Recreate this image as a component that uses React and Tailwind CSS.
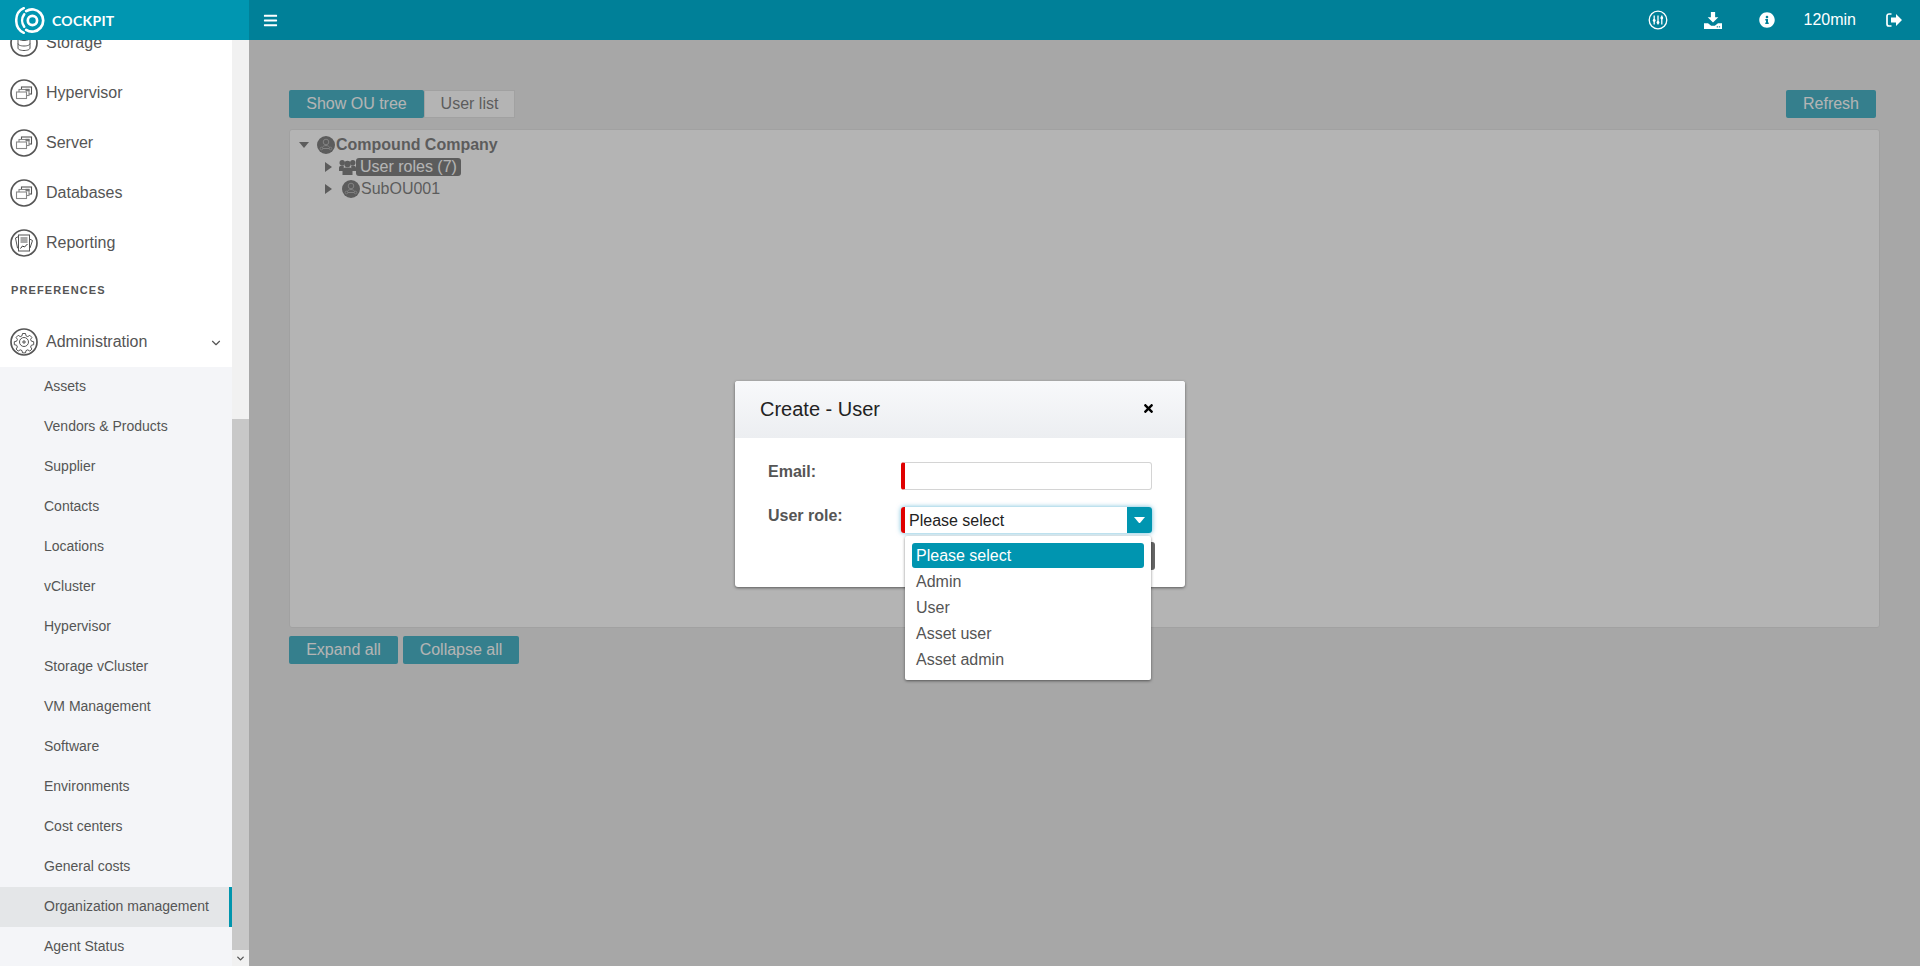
import { FaBars, FaInfoCircle, FaTimes } from 'react-icons/fa'
import { ChevronDown } from 'lucide-react'

const subItems = [
  'Assets',
  'Vendors & Products',
  'Supplier',
  'Contacts',
  'Locations',
  'vCluster',
  'Hypervisor',
  'Storage vCluster',
  'VM Management',
  'Software',
  'Environments',
  'Cost centers',
  'General costs',
  'Organization management',
  'Agent Status',
]

const roles = ['Admin', 'User', 'Asset user', 'Asset admin']

function Logo() {
  return (
    <svg width="31" height="27" viewBox="0 0 32 28" fill="none" stroke="white" strokeLinecap="round" className="shrink-0">
      <path d="M9 1.200C3.600 3.600 1.200 8.500 1.200 14S3.600 24.400 9 26.800" strokeWidth="2.600" />
      <circle cx="18" cy="14" r="4.800" strokeWidth="2.800" />
      <path d="M11.500 4.300A11.500 11.500 0 1 1 11.500 23.700" strokeWidth="2.800" />
      <path d="M9.500 7.500A11 11 0 0 0 9.500 20.500" strokeWidth="2.600" />
    </svg>
  )
}

function StackIcon() {
  return (
    <g stroke="#555" strokeWidth="1.100">
      <rect x="11.500" y="8" width="10" height="7" fill="#fff" />
      <rect x="9" y="10.500" width="10" height="6" fill="#fff" stroke="#888" />
      <rect x="6.500" y="13" width="10" height="6.500" fill="#fff" stroke="#888" />
      <rect x="15.500" y="9.800" width="4" height="2.500" fill="#777" stroke="none" />
    </g>
  )
}

function StorageGlyph() {
  return (
    <g fill="none" stroke="#555" strokeWidth="1">
      <ellipse cx="14" cy="9" rx="6" ry="2.500" />
      <path d="M8 9v10c0 1.500 2.500 2.500 6 2.500s6-1 6-2.500V9M8 14.500c0 1.500 2.500 2.500 6 2.500s6-1 6-2.500" />
    </g>
  )
}

function ReportGlyph() {
  return (
    <g fill="none" stroke="#555" strokeWidth="1">
      <path d="M8.500 7.500l-3 1.500 2 10 2.500 1.500M19.500 10l3 1.500-2.500 7.500-2 2" />
      <rect x="8.500" y="6" width="11" height="16" fill="#fff" />
      <path d="M10.500 9h7M10.500 11h7M10.500 13h7" />
      <path d="M10.500 19.500l2-2.500 2 1 3-3" stroke="#333" />
    </g>
  )
}

function GearGlyph() {
  return (
    <g fill="none" stroke="#555" strokeWidth="1">
      <path d="M12.500 5.500h3l.500 2.300 1.800.800 2-1.300 2.100 2.100-1.300 2 .800 1.800 2.300.500v3l-2.300.500-.800 1.800 1.300 2-2.100 2.100-2-1.300-1.800.800-.500 2.300h-3l-.500-2.300-1.800-.800-2 1.300-2.100-2.100 1.300-2-.800-1.800-2.300-.500v-3l2.300-.500.800-1.800-1.300-2 2.100-2.100 2 1.300 1.800-.800z" />
      <circle cx="14" cy="14" r="4.500" />
      <path d="M14 12v4M12 14h4" />
    </g>
  )
}

function RingIcon({ children }) {
  return (
    <svg width="28" height="28" viewBox="0 0 28 28" className="shrink-0">
      <circle cx="14" cy="14" r="13" fill="none" stroke="#555" strokeWidth="1.700" />
      {children}
    </svg>
  )
}

function NavItem({ label, glyph, chevron }) {
  return (
    <div className="h-[50px] flex items-center pl-[10px] pr-[9px] text-[16px] text-[#555] gap-[8px]">
      <RingIcon>{glyph}</RingIcon>
      <span>{label}</span>
      {chevron && <ChevronDown size={14} strokeWidth={2} className="ml-auto mt-[2px] text-[#555]" />}
    </div>
  )
}

function SliderIcon() {
  return (
    <svg width="20" height="20" viewBox="0 0 20 20" fill="none" stroke="white" strokeWidth="1.300">
      <circle cx="10" cy="10" r="8.800" />
      <path d="M6.200 5.500v9M10 5.500v9M13.800 5.500v9" />
      <circle cx="6.200" cy="10.500" r="1.400" fill="white" stroke="none" />
      <circle cx="10" cy="12.500" r="1.400" fill="white" stroke="none" />
      <circle cx="13.800" cy="8" r="1.400" fill="white" stroke="none" />
    </svg>
  )
}

function DownloadIcon() {
  return (
    <svg width="18" height="17" viewBox="0 0 17 16" fill="white">
      <path d="M6.500 0h4v5h3l-5 5-5-5h3z" />
      <path d="M0 10.500h3.800l3 2.500h3.400l3-2.500H17V16H0z" />
      <rect x="12" y="13.500" width="1.200" height="1" fill="#007f96" />
      <rect x="14" y="13.500" width="1.200" height="1" fill="#007f96" />
    </svg>
  )
}

function SignOutIcon() {
  return (
    <svg width="16" height="14" viewBox="0 0 16 14" className="shrink-0">
      <path d="M5.500 1H3a2 2 0 0 0-2 2v8a2 2 0 0 0 2 2h2.500" fill="none" stroke="white" strokeWidth="1.700" />
      <path d="M10 1l6 6-6 6V9.500H5v-5h5z" fill="white" />
    </svg>
  )
}

function OuIcon() {
  return (
    <svg width="18" height="18" viewBox="0 0 18 18" className="shrink-0">
      <circle cx="9" cy="9" r="9" fill="#4f4f4f" />
      <circle cx="9" cy="6" r="2.800" fill="#4f4f4f" stroke="#9a9a9a" strokeWidth="1" />
      <path d="M4.500 12.500c1-1.800 2.500-3 4.500-3s3.500 1.200 4.500 3z" fill="none" stroke="#9a9a9a" strokeWidth="1" />
      <circle cx="4.500" cy="12.500" r="1.300" fill="#4f4f4f" stroke="#9a9a9a" strokeWidth="0.800" />
      <circle cx="13.500" cy="12.500" r="1.300" fill="#4f4f4f" stroke="#9a9a9a" strokeWidth="0.800" />
    </svg>
  )
}

function UsersIcon() {
  return (
    <svg width="17" height="16" viewBox="0 0 17 16" fill="#4f4f4f" className="shrink-0">
      <circle cx="3.200" cy="3.800" r="2.700" />
      <circle cx="13.800" cy="3.800" r="2.700" />
      <path d="M0 12V9c0-1.500 1-2.400 2.500-2.400h2.300V12zM17 12V9c0-1.500-1-2.400-2.500-2.400h-2.300V12z" />
      <circle cx="8.500" cy="5" r="3.200" />
      <path d="M3.500 16v-4.500c0-2 1.300-3 3-3h4c1.700 0 3 1 3 3V16z" />
    </svg>
  )
}

function CaretRight({ className = '' }) {
  return (
    <svg width="7" height="10" viewBox="0 0 7 10" className={`shrink-0 ${className}`}>
      <path d="M0 0l7 5-7 5z" fill="#4f4f4f" />
    </svg>
  )
}

function CaretDown({ color = '#4f4f4f', size = 10, className = '' }) {
  return (
    <svg width={size} height={size * 0.6} viewBox="0 0 10 6" className={`shrink-0 ${className}`}>
      <path d="M0 0h10L5 6z" fill={color} />
    </svg>
  )
}

function PageButton({ children, className = '' }) {
  return (
    <button className={`h-[28px] bg-[#0095b0] rounded-[2px] text-white text-[16px] flex items-center justify-center ${className}`}>
      {children}
    </button>
  )
}

export default function App() {
  return (
    <div className="h-[966px] overflow-hidden flex flex-col font-['Liberation_Sans',Arial,sans-serif]">
      <header className="h-[40px] shrink-0 flex text-white z-20">
        <div className="w-[249px] bg-[#0096b1] flex items-center pl-[15px] gap-[6px]">
          <Logo />
          <span className="font-['Lato',sans-serif] font-bold text-[14px] tracking-[0.3px]">COCKPIT</span>
        </div>
        <div className="flex-1 bg-[#008098] flex items-center pl-[14px]">
          <FaBars size={15} />
          <div className="ml-auto flex items-center">
            <SliderIcon />
            <div className="ml-[36px]"><DownloadIcon /></div>
            <FaInfoCircle size={16} className="ml-[37px]" />
            <span className="ml-[29px] text-[16px]">120min</span>
            <div className="ml-[30px] mr-[18px]"><SignOutIcon /></div>
          </div>
        </div>
      </header>

      <div className="flex-1 min-h-0 flex">
        <aside className="w-[249px] shrink-0 flex bg-[#f1f1f1] relative">
          <div className="w-[232px] bg-white overflow-hidden">
            <div className="-mt-[22px]">
              <NavItem label="Storage" glyph={<StorageGlyph />} />
              <NavItem label="Hypervisor" glyph={<StackIcon />} />
              <NavItem label="Server" glyph={<StackIcon />} />
              <NavItem label="Databases" glyph={<StackIcon />} />
              <NavItem label="Reporting" glyph={<ReportGlyph />} />
              <div className="h-[49px] pl-[11px] pb-[5px] flex items-center text-[11px] font-bold tracking-[1.1px] text-[#555]">
                PREFERENCES
              </div>
              <NavItem label="Administration" glyph={<GearGlyph />} chevron />
              <div className="bg-[#f4f5f8]">
                {subItems.map((item) => (
                  <div
                    key={item}
                    className={
                      item === 'Organization management'
                        ? 'h-[40px] pl-[44px] pb-[2px] flex items-center text-[14px] text-[#555] bg-[#e4e6e8] border-r-[3px] border-[#0095ad]'
                        : 'h-[40px] pl-[44px] pb-[2px] flex items-center text-[14px] text-[#555]'
                    }
                  >
                    {item}
                  </div>
                ))}
              </div>
            </div>
          </div>
          <div className="flex-1 flex flex-col">
            <div className="h-[379px] shrink-0" />
            <div className="flex-1 bg-[#c8c8c8]" />
            <div className="h-[16px] shrink-0 flex items-center justify-center">
              <ChevronDown size={11} strokeWidth={3} className="text-[#555]" />
            </div>
          </div>
        </aside>

        <main className="flex-1 relative bg-[#e5e5e5] pt-[50px] pl-[40px] pr-[44px]">
          <div className="flex justify-between">
            <div className="flex">
              <PageButton className="w-[135px]">Show OU tree</PageButton>
              <div className="w-[91px] h-[28px] border border-[#d8d8d8] text-[#4f4f4f] text-[16px] flex items-center justify-center bg-white">
                User list
              </div>
            </div>
            <PageButton className="w-[90px]">Refresh</PageButton>
          </div>
          <div className="mt-[11px] h-[499px] bg-white border border-[#d8d8d8] rounded-[3px] -mr-[4px] pt-[4px] pl-[9px] text-[16px] text-[#4f4f4f]">
            <div className="flex items-center h-[22px]">
              <CaretDown className="mr-[8px]" />
              <OuIcon />
              <span className="font-bold ml-[1px]">Compound Company</span>
            </div>
            <div className="flex items-center h-[22px] pl-[26px]">
              <CaretRight className="mr-[7px]" />
              <UsersIcon />
              <span className="bg-[#4f4f4f] text-white rounded-[3px] px-[4px] leading-[18px]">User roles (7)</span>
            </div>
            <div className="flex items-center h-[21px] pl-[26px]">
              <CaretRight className="mr-[10px]" />
              <OuIcon />
              <span className="ml-[1px]">SubOU001</span>
            </div>
          </div>
          <div className="mt-[8px] flex gap-[5px]">
            <PageButton className="w-[109px]">Expand all</PageButton>
            <PageButton className="w-[116px]">Collapse all</PageButton>
          </div>

          {/* dim layer sits on top of the page content, the modal on top of that */}
          <div className="absolute inset-0 bg-[#696969]/50 pointer-events-none" />

          <div className="absolute left-[486px] top-[341px] w-[450px] h-[206px] bg-white rounded-[3px] shadow-[0_1px_3px_rgba(0,0,0,0.5)]">
            <div className="h-[57px] bg-gradient-to-b from-[#f8f9fb] to-[#eceef1] rounded-t-[3px] flex items-center pl-[25px] pr-[30px] pb-[2px] justify-between">
              <span className="text-[20px] text-[#222]">Create - User</span>
              <FaTimes size={13} className="text-black" />
            </div>
            <div className="pl-[33px] pr-[33px] pt-[24px] text-[16px] text-[#555]">
              <div className="flex">
                <label className="w-[133px] font-bold -mt-[2px]">Email:</label>
                <div className="flex-1 h-[28px] border border-[#d4d4d4] border-l-[4px] border-l-[#e00000] rounded-[3px]" />
              </div>
              <div className="flex mt-[17px]">
                <label className="w-[133px] font-bold -mt-[3px]">User role:</label>
                <div className="flex-1 relative">
                  <div className="h-[26px] flex items-center border-l-[4px] border-l-[#e00000] rounded-[3px] shadow-[0_0_5px_rgba(0,140,190,0.6)] text-[#222] pl-[4px]">
                    <span className="pt-[1px]">Please select</span>
                    <div className="ml-auto w-[25px] h-[26px] bg-[#0095b0] rounded-r-[3px] flex items-center justify-center">
                      <CaretDown color="white" size={11} />
                    </div>
                  </div>
                  <div className="absolute left-[4px] top-[29px] w-[246px] h-[144px] bg-white z-10 rounded-[2px] shadow-[0_1px_3px_rgba(0,0,0,0.5)] p-[7px]">
                    <div className="h-[25px] bg-[#0095b0] text-white rounded-[3px] pl-[4px] flex items-center">Please select</div>
                    {roles.map((role) => (
                      <div key={role} className="h-[26px] pl-[4px] pt-[2px] flex items-center">{role}</div>
                    ))}
                  </div>
                  <div className="absolute right-[-3px] top-[35px] w-[12px] h-[28px] bg-[#666] rounded-r-[3px]" />
                </div>
              </div>
            </div>
          </div>
        </main>
      </div>
    </div>
  )
}
